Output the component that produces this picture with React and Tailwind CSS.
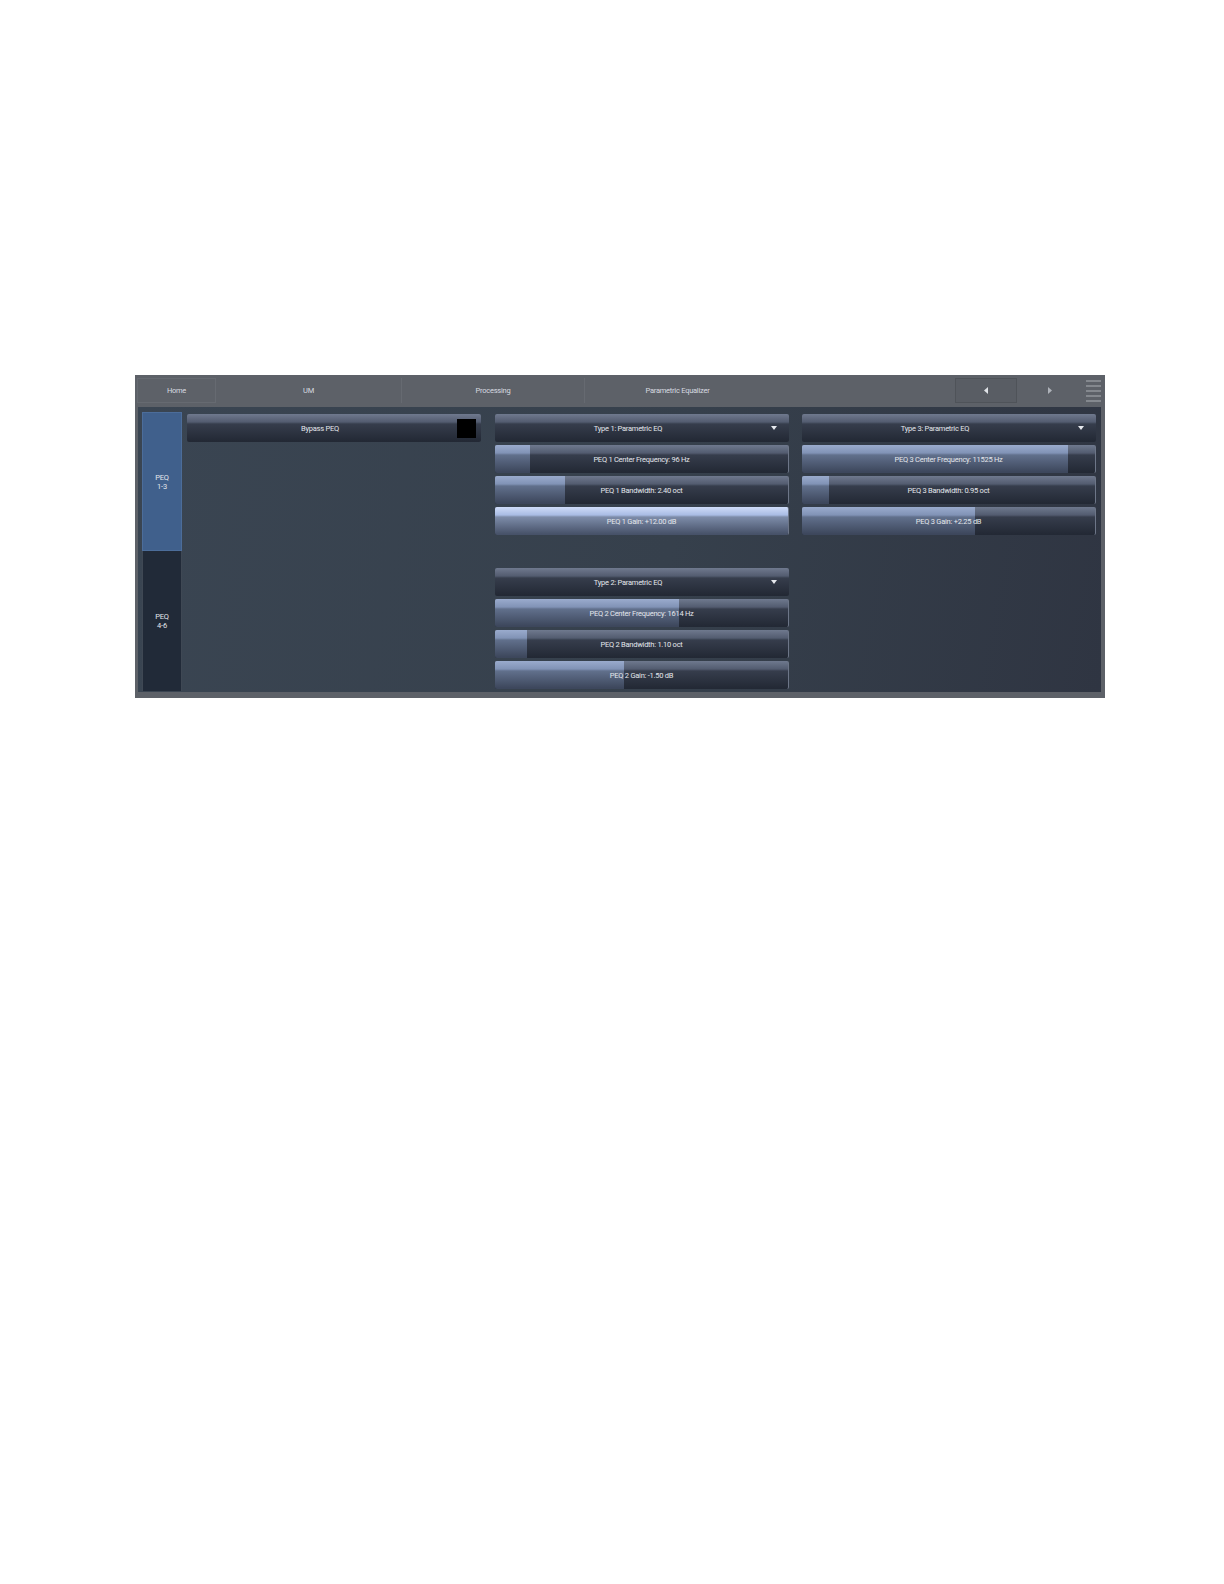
import React from "react";

const BASE =
  "bg-[linear-gradient(180deg,#6f798e_0px,#535c70_8px,#363d4c_10px,#232935_27px)]";
const FILL =
  "bg-[linear-gradient(180deg,#9aabcd_0px,#8193b6_8px,#61708c_10px,#3d475c_27px)]";
const FILL_FULL =
  "bg-[linear-gradient(180deg,#cfdcf9_0px,#a9bce4_8px,#7d8ca9_10px,#475269_27px)]";

const groupOne = [
  { type: "Type 1: Parametric EQ" },
  { label: "PEQ 1 Center Frequency: 96 Hz", fill: 35 },
  { label: "PEQ 1 Bandwidth: 2.40 oct", fill: 70 },
  { label: "PEQ 1 Gain: +12.00 dB", fill: 294 },
];

const groupTwo = [
  { type: "Type 2: Parametric EQ" },
  { label: "PEQ 2 Center Frequency: 1614 Hz", fill: 184 },
  { label: "PEQ 2 Bandwidth: 1.10 oct", fill: 32 },
  { label: "PEQ 2 Gain: -1.50 dB", fill: 129 },
];

const groupThree = [
  { type: "Type 3: Parametric EQ" },
  { label: "PEQ 3 Center Frequency: 11525 Hz", fill: 266 },
  { label: "PEQ 3 Bandwidth: 0.95 oct", fill: 27 },
  { label: "PEQ 3 Gain: +2.25 dB", fill: 173 },
];

const Arrow = () => (
  <svg width="6" height="4" viewBox="0 0 6 4" className="absolute right-[12px] top-[12px]">
    <path d="M0 0h6L3 4z" fill="#e6e9ee" />
  </svg>
);

const Button = ({ item }) => {
  if (item.type) {
    return (
      <div className={`relative h-[28px] rounded-[2px] ${BASE} flex items-center justify-center pr-[28px]`}>
        <span>{item.type}</span>
        <Arrow />
      </div>
    );
  }
  return (
    <div className={`relative h-[28px] rounded-[2px] overflow-hidden ${BASE} border-r border-[#6d7688]`}>
      <div
        className={`absolute left-0 top-0 bottom-0 ${item.fill >= 294 ? FILL_FULL : FILL}`}
        style={{ width: item.fill }}
      />
      <div className="relative h-full flex items-center justify-center">{item.label}</div>
    </div>
  );
};

const Group = ({ items }) => (
  <div className="flex flex-col gap-[3px]">
    {items.map((item) => (
      <Button key={item.type || item.label} item={item} />
    ))}
  </div>
);

export default function App() {
  return (
    <div className="min-h-[1584px] bg-white pt-[375px] pl-[135px] font-['Roboto',sans-serif] text-[7.5px] tracking-[-0.25px] leading-[9px] text-[#e4e7ec]">
      <div className="w-[970px] h-[323px] bg-[#5d6168] flex flex-col">
        {/* Top bar */}
        <div className="h-[32px] flex pl-[2px] pt-[3px] text-[#d8dbe0]">
          <div className="w-[79px] h-[25px] flex items-center justify-center border border-[#666a71]">Home</div>
          <div className="w-[186px] h-[25px] flex items-center justify-center border-r border-[#666a71]">UM</div>
          <div className="w-[183px] h-[25px] flex items-center justify-center border-r border-[#666a71]">Processing</div>
          <div className="w-[185px] h-[25px] flex items-center justify-center">Parametric Equalizer</div>
          <div className="w-[185px]" />
          <div className="w-[62px] h-[25px] flex items-center justify-center border border-[#4f5359] bg-[#595d64]">
            <svg width="4" height="7" viewBox="0 0 4 7"><path d="M4 0v7L0 3.5z" fill="#e0e3e8" /></svg>
          </div>
          <div className="w-[64px] h-[25px] flex items-center justify-center pl-[2px]">
            <svg width="4" height="7" viewBox="0 0 4 7"><path d="M0 0v7l4-3.5z" fill="#aeb2b9" /></svg>
          </div>
          <div className="ml-[5px] w-[15px] flex flex-col gap-[3px] pt-[2px]">
            <div className="h-[2px] bg-[#84888e]" />
            <div className="h-[2px] bg-[#84888e]" />
            <div className="h-[2px] bg-[#84888e]" />
            <div className="h-[2px] bg-[#84888e]" />
            <div className="h-[2px] bg-[#84888e]" />
          </div>
        </div>

        {/* Body */}
        <div className="ml-[3px] w-[963px] h-[285px] flex pl-[4px] bg-[linear-gradient(100deg,#3a4552_0%,#36404c_55%,#2f3542_100%)]">
          <div className="w-[40px] mt-[5px] flex flex-col">
            <div className="h-[139px] bg-[#40608c] border border-[#4c6d9a] flex items-center justify-center text-center">
              PEQ<br />1-3
            </div>
            <div className="h-[140px] bg-[#212a38] border-x border-[#3f4854] flex items-center justify-center text-center">
              PEQ<br />4-6
            </div>
          </div>

          <div className="w-[294px] ml-[5px] mt-[7px]">
            <div className={`relative h-[28px] rounded-[2px] ${BASE} flex items-center justify-center pr-[28px]`}>
              <span>Bypass PEQ</span>
              <div className="absolute right-[5px] top-[5px] w-[19px] h-[19px] bg-black" />
            </div>
          </div>

          <div className="w-[294px] ml-[14px] mt-[7px] flex flex-col gap-[33px]">
            <Group items={groupOne} />
            <Group items={groupTwo} />
          </div>

          <div className="w-[294px] ml-[13px] mt-[7px]">
            <Group items={groupThree} />
          </div>
        </div>
      </div>
    </div>
  );
}
